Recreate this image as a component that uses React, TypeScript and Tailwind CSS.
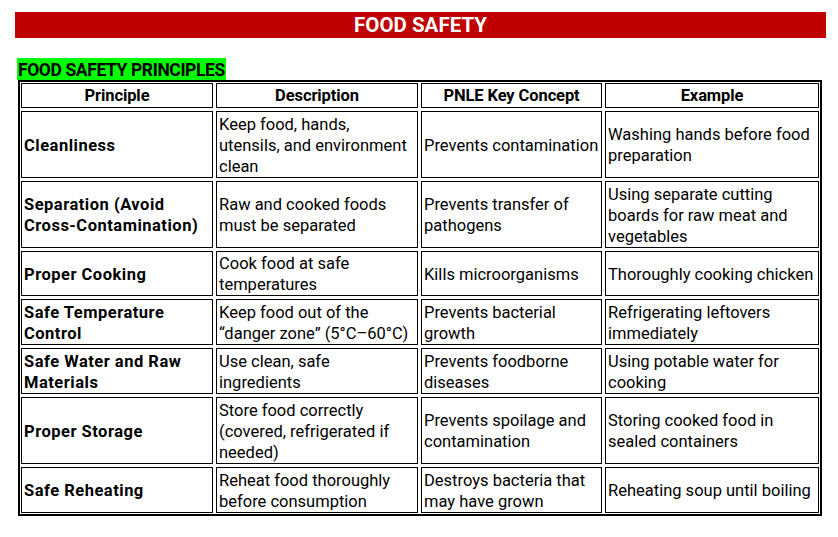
const rows: { principle: string[]; description: string[]; concept: string[]; example: string[] }[] = [
  {
    principle: ["Cleanliness"],
    description: ["Keep food, hands,", "utensils, and environment", "clean"],
    concept: ["Prevents contamination"],
    example: ["Washing hands before food", "preparation"],
  },
  {
    principle: ["Separation (Avoid", "Cross-Contamination)"],
    description: ["Raw and cooked foods", "must be separated"],
    concept: ["Prevents transfer of", "pathogens"],
    example: ["Using separate cutting", "boards for raw meat and", "vegetables"],
  },
  {
    principle: ["Proper Cooking"],
    description: ["Cook food at safe", "temperatures"],
    concept: ["Kills microorganisms"],
    example: ["Thoroughly cooking chicken"],
  },
  {
    principle: ["Safe Temperature", "Control"],
    description: ["Keep food out of the", "\u201cdanger zone\u201d (5°C\u201360°C)"],
    concept: ["Prevents bacterial", "growth"],
    example: ["Refrigerating leftovers", "immediately"],
  },
  {
    principle: ["Safe Water and Raw", "Materials"],
    description: ["Use clean, safe", "ingredients"],
    concept: ["Prevents foodborne", "diseases"],
    example: ["Using potable water for", "cooking"],
  },
  {
    principle: ["Proper Storage"],
    description: ["Store food correctly", "(covered, refrigerated if", "needed)"],
    concept: ["Prevents spoilage and", "contamination"],
    example: ["Storing cooked food in", "sealed containers"],
  },
  {
    principle: ["Safe Reheating"],
    description: ["Reheat food thoroughly", "before consumption"],
    concept: ["Destroys bacteria that", "may have grown"],
    example: ["Reheating soup until boiling"],
  },
];

const headers = ["Principle", "Description", "PNLE Key Concept", "Example"];

function Cell({ lines, bold }: { lines: string[]; bold?: boolean }) {
  return (
    <div
      className={`flex flex-col justify-center whitespace-nowrap border border-black pl-[2px] pt-[1px] leading-[21px] text-black ${
        bold ? "text-[16.5px] font-bold tracking-[0.5px]" : "text-[16.5px] font-normal"
      }`}
    >
      {lines.map((l) => (
        <span key={l}>{l}</span>
      ))}
    </div>
  );
}

export default function App() {
  return (
    <div
      className="relative h-[537px] w-[838px] overflow-hidden bg-white"
      style={{ fontFamily: "Roboto, 'Liberation Sans', sans-serif" }}
    >
      <div className="ml-[15px] mt-[12px] flex h-[26px] w-[811px] items-center justify-center bg-[#c00000]">
        <span className="text-[20.5px] font-bold text-white">FOOD SAFETY</span>
      </div>

      <div className="ml-[17px] mt-[20px] flex h-[22px] w-[209px] items-end bg-[#00ff00] pl-[1px]">
        <span className="text-[17.5px] font-bold leading-[20px] tracking-[-0.4px] text-black">
          FOOD SAFETY PRINCIPLES
        </span>
      </div>

      <div className="ml-[18px] grid w-[804px] grid-cols-[192px_202px_181px_214px] grid-rows-[25px_67px_67px_45px_46px_46px_67px_46px] gap-[3px] border-2 border-black p-[1px]">
        {headers.map((h) => (
          <div
            key={h}
            className="flex items-center justify-center border border-black pt-[2px] text-[16.5px] font-bold tracking-[-0.1px] text-black"
          >
            {h}
          </div>
        ))}
        {rows.map((r) => (
          <>
            <Cell key={r.principle[0] + "p"} lines={r.principle} bold />
            <Cell key={r.principle[0] + "d"} lines={r.description} />
            <Cell key={r.principle[0] + "c"} lines={r.concept} />
            <Cell key={r.principle[0] + "e"} lines={r.example} />
          </>
        ))}
      </div>
    </div>
  );
}
